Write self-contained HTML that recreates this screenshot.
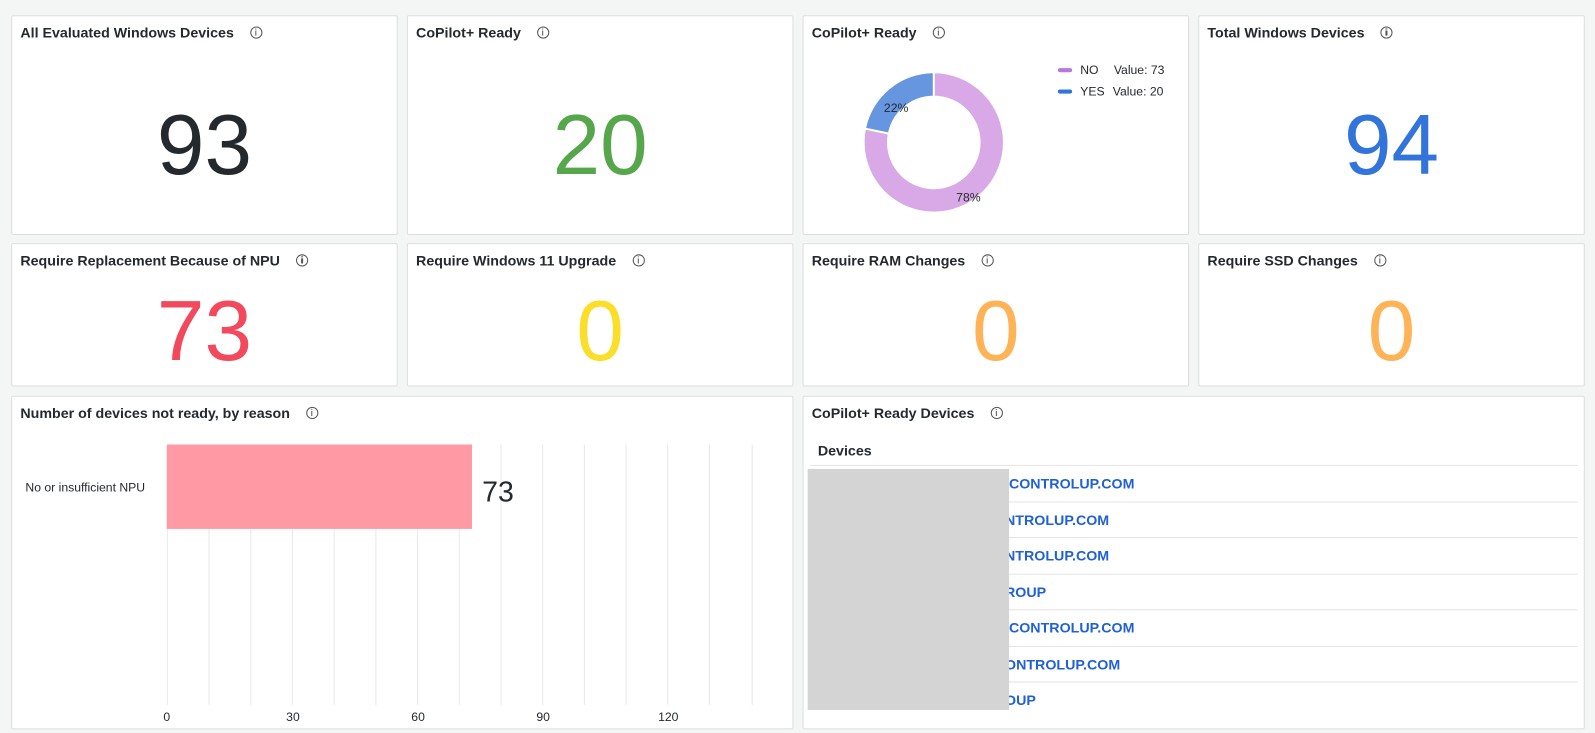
<!DOCTYPE html>
<html><head><meta charset="utf-8"><style>
body{margin:0;width:1595px;height:733px;background:#f4f5f5;font-family:"Liberation Sans",sans-serif;position:relative;overflow:hidden}
#w{position:absolute;left:0;top:0;width:1568px;height:721px;transform:scale(1.0172);transform-origin:0 0}
.p{position:absolute;background:#fff;border:1px solid #dcdee0;border-radius:2px;box-sizing:border-box}
.t{position:absolute;left:8px;top:8px;font-size:14px;font-weight:bold;color:#24292e;white-space:nowrap;display:flex;align-items:center}
.i{display:inline-block;width:10px;height:10px;border:1.3px solid #555;border-radius:50%;margin-left:16px;position:relative}
.i:after{content:"";position:absolute;left:4px;top:3px;width:1.3px;height:4.5px;background:#555}
.i:before{content:"";position:absolute;left:4px;top:1px;width:1.3px;height:1.3px;background:#555}
.n{position:absolute;left:0;right:0;text-align:center;font-size:84px;line-height:1}
.row{position:absolute;left:6px;right:6px;height:35px;border-top:1px solid #e4e4e4;color:#1f60d6;font-size:14px;font-weight:bold;line-height:35px;box-sizing:border-box}
</style></head><body><div id="w">
<div class="p" style="left:11px;top:15px;width:380px;height:216px"><div class="t">All Evaluated Windows Devices<span class="i"></span></div><div class="n" style="top:84px;color:#24292e">93</div></div>
<div class="p" style="left:400px;top:15px;width:380px;height:216px"><div class="t">CoPilot+ Ready<span class="i"></span></div><div class="n" style="top:84px;color:#56a64b">20</div></div>
<div class="p" style="left:789px;top:15px;width:380px;height:216px"><div class="t">CoPilot+ Ready<span class="i"></span></div>
<svg style="position:absolute;left:0;top:0" width="380" height="216">
<circle cx="128" cy="124" r="57" fill="none" stroke="#d8a9e6" stroke-width="22"/>
<path d="M128 67 A57 57 0 0 0 72.1 112.9" fill="none" stroke="#6796e0" stroke-width="22"/>
<line x1="128" y1="55" x2="128" y2="79" stroke="#fff" stroke-width="2"/>
<line x1="61" y1="110.6" x2="84" y2="115.4" stroke="#fff" stroke-width="2"/>
<text x="79" y="94" font-size="12" fill="#24292e" font-family="Liberation Sans">22%</text>
<text x="150" y="182" font-size="12" fill="#24292e" font-family="Liberation Sans">78%</text>
<rect x="250" y="51" width="14" height="4" rx="2" fill="#b877d9"/>
<rect x="250" y="72" width="14" height="4" rx="2" fill="#3274d9"/>
<text x="272" y="57" font-size="12" fill="#24292e" font-family="Liberation Sans">NO</text>
<text x="305" y="57" font-size="12" fill="#24292e" font-family="Liberation Sans">Value: 73</text>
<text x="272" y="78" font-size="12" fill="#24292e" font-family="Liberation Sans">YES</text>
<text x="304" y="78" font-size="12" fill="#24292e" font-family="Liberation Sans">Value: 20</text>
</svg></div>
<div class="p" style="left:1178px;top:15px;width:380px;height:216px"><div class="t">Total Windows Devices<span class="i"></span></div><div class="n" style="top:84px;color:#3274d9">94</div></div>

<div class="p" style="left:11px;top:239px;width:380px;height:141px"><div class="t">Require Replacement Because of NPU<span class="i"></span></div><div class="n" style="top:43px;color:#f2495c">73</div></div>
<div class="p" style="left:400px;top:239px;width:380px;height:141px"><div class="t">Require Windows 11 Upgrade<span class="i"></span></div><div class="n" style="top:43px;color:#fade2a">0</div></div>
<div class="p" style="left:789px;top:239px;width:380px;height:141px"><div class="t">Require RAM Changes<span class="i"></span></div><div class="n" style="top:43px;color:#ffb357">0</div></div>
<div class="p" style="left:1178px;top:239px;width:380px;height:141px"><div class="t">Require SSD Changes<span class="i"></span></div><div class="n" style="top:43px;color:#ffb357">0</div></div>

<div class="p" style="left:11px;top:389px;width:769px;height:328px"><div class="t">Number of devices not ready, by reason<span class="i"></span></div>
<svg style="position:absolute;left:0;top:0" width="769" height="328" font-family="Liberation Sans">
<g stroke="#e8e8e8" stroke-width="1">
<line x1="152.5" y1="47" x2="152.5" y2="303"/><line x1="193.5" y1="47" x2="193.5" y2="303"/><line x1="234.5" y1="47" x2="234.5" y2="303"/><line x1="275.5" y1="47" x2="275.5" y2="303"/><line x1="316.5" y1="47" x2="316.5" y2="303"/><line x1="357.5" y1="47" x2="357.5" y2="303"/><line x1="398.5" y1="47" x2="398.5" y2="303"/><line x1="439.5" y1="47" x2="439.5" y2="303"/><line x1="480.5" y1="47" x2="480.5" y2="303"/><line x1="521.5" y1="47" x2="521.5" y2="303"/><line x1="562.5" y1="47" x2="562.5" y2="303"/><line x1="603.5" y1="47" x2="603.5" y2="303"/><line x1="644.5" y1="47" x2="644.5" y2="303"/><line x1="685.5" y1="47" x2="685.5" y2="303"/><line x1="727.5" y1="47" x2="727.5" y2="303"/>
</g>
<rect x="152" y="47" width="300" height="83" fill="#ff9aa5"/>
<text x="462" y="103" font-size="28" fill="#24292e">73</text>
<text x="13" y="93" font-size="12" fill="#24292e">No or insufficient NPU</text>
<g font-size="12" fill="#24292e" text-anchor="middle"><text x="152" y="319">0</text><text x="276" y="319">30</text><text x="399" y="319">60</text><text x="522" y="319">90</text><text x="645" y="319">120</text></g>
</svg></div>

<div class="p" style="left:789px;top:389px;width:769px;height:328px"><div class="t">CoPilot+ Ready Devices<span class="i"></span></div>
<div style="position:absolute;left:14px;top:45px;font-size:14px;font-weight:bold;color:#24292e">Devices</div>
<div class="row" style="top:67px;padding-left:192px">.CONTROLUP.COM</div>
<div class="row" style="top:103px;padding-left:192px">NTROLUP.COM</div>
<div class="row" style="top:138px;padding-left:192px">NTROLUP.COM</div>
<div class="row" style="top:174px;padding-left:192px">ROUP</div>
<div class="row" style="top:209px;padding-left:192px">.CONTROLUP.COM</div>
<div class="row" style="top:245px;padding-left:192px">ONTROLUP.COM</div>
<div class="row" style="top:280px;padding-left:192px">OUP</div>
<div style="position:absolute;left:4px;top:71px;width:198px;height:237px;background:#d4d4d4"></div>
</div>
</div></body></html>
